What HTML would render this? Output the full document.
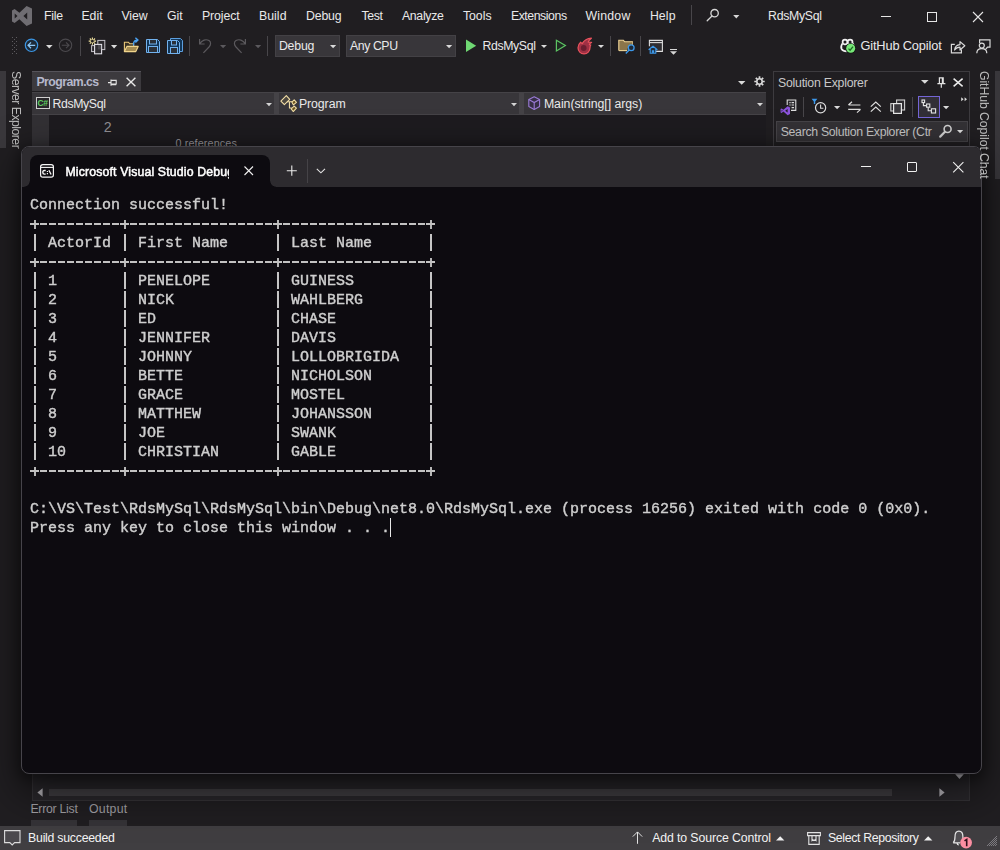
<!DOCTYPE html>
<html><head><meta charset="utf-8"><title>RdsMySql - Microsoft Visual Studio</title>
<style>
*{box-sizing:border-box;margin:0;padding:0}
html,body{width:1000px;height:850px;overflow:hidden}
body{position:relative;background:#201e21;font-family:"Liberation Sans",sans-serif;font-size:12px;color:#f0f0f0}
.b{position:absolute}
.t{position:absolute;white-space:pre;display:inline-block}
svg{position:absolute;overflow:visible}
.v{position:absolute;will-change:transform;white-space:pre;transform-origin:0 0;transform:rotate(90deg);font-size:12.3px;line-height:12.3px;color:#bababa}
#con{will-change:transform;position:absolute;left:21px;top:146px;width:961px;height:628px;border-radius:8px;background:#0d0b10;border:1px solid #46444a;box-shadow:0 16px 40px 4px rgba(0,0,0,.5),0 3px 14px 2px rgba(0,0,0,.4);overflow:hidden}
#con .tb{position:absolute;left:0;top:0;width:100%;height:40px;background:#2d2b2f}
#con .tab{position:absolute;left:8px;top:8px;width:240px;height:33px;background:#0d0b10;border-radius:8px 8px 0 0}
#con pre{position:absolute;left:8px;top:49px;font-family:"Liberation Mono",monospace;font-size:15px;line-height:19px;color:#cfcfcf;white-space:pre;-webkit-text-stroke:.4px #cdcdcd}
#con .hl{position:absolute;left:8px;width:405px;height:2px;background:repeating-linear-gradient(90deg,transparent 0,transparent 1px,#c2c2c2 1px,#c2c2c2 8.2px,transparent 8.2px,transparent 9px)}
#con .pl{position:absolute;width:2px;height:9px;background:#b6b6b6}
#con .ph{position:absolute;width:9px;height:2px;background:#c2c2c2}
#con .vb{position:absolute;width:1.8px;background:repeating-linear-gradient(180deg,transparent 0,transparent 1.2px,#c6c6c6 1.2px,#c6c6c6 17.8px,transparent 17.8px,transparent 19px)}
#con pre i{font-style:normal;color:transparent;-webkit-text-stroke:0 transparent}

</style></head>
<body>
<!-- side strips -->
<div class="b" style="left:0;top:71px;width:6px;height:77px;background:#3a383c"></div>
<div class="b" style="left:995px;top:71px;width:5px;height:108px;background:#39373b"></div>
<div class="v" style="left:22.3px;top:70.8px;letter-spacing:-0.55px">Server Explorer</div>

<!-- toolbar combos -->
<div class="b" style="left:275px;top:35px;width:65px;height:22px;background:#38363a;border:1px solid #434145"></div>
<div class="b" style="left:346px;top:35px;width:110px;height:22px;background:#38363a;border:1px solid #434145"></div>

<!-- document tab -->
<div class="b" style="left:32px;top:71px;width:109px;height:20px;background:#3c3a3e;border-top:1px solid #55535a"></div>
<!-- nav bar -->
<div class="b" style="left:32px;top:92px;width:734px;height:23px;background:#454347"></div>
<div class="b" style="left:32px;top:93px;width:242px;height:21px;background:#38363a"></div>
<div class="b" style="left:279px;top:93px;width:240px;height:21px;background:#38363a"></div>
<div class="b" style="left:524px;top:93px;width:242px;height:21px;background:#38363a"></div>
<!-- editor -->
<div class="b" style="left:32px;top:115px;width:734px;height:659px;background:#1d1b1f"></div>
<div class="b" style="left:32px;top:115px;width:17px;height:659px;background:#323034"></div>

<!-- solution explorer -->
<div class="b" style="left:773px;top:71px;width:197px;height:730px;border:1px solid #3d3b3f"></div>
<div class="b" style="left:776px;top:121px;width:192px;height:21px;background:#333135;border:1px solid #454347"></div>
<div class="b" style="left:918px;top:96px;width:22px;height:22px;border:1px solid #7465d6;background:#322f37"></div>

<!-- bottom scroll area -->
<div class="b" style="left:32px;top:773px;width:938px;height:28px;background:#29272b;border:1px solid #353337;border-top:none"></div>
<div class="b" style="left:49px;top:789px;width:843px;height:7px;background:#403e42"></div>
<div class="b" style="left:31px;top:820px;width:46px;height:6px;background:#353337"></div>
<div class="b" style="left:89px;top:820px;width:38px;height:6px;background:#353337"></div>

<!-- status bar -->
<div class="b" style="left:0;top:826px;width:1000px;height:24px;background:#403e41"></div>

<!-- VS logo -->
<svg style="left:12px;top:6px" width="20" height="20" viewBox="0 0 20 20"><path fill="#6f6d72" fill-rule="evenodd" d="M14.6 0 20 2.6V17.4L14.6 20 7.4 13.3 2.6 17 0 15.6V4.4L2.6 3 7.4 6.7ZM15.2 6.6 11.4 10 15.2 13.4ZM2.7 7.5V12.5L5.5 10Z"/></svg>
<!-- menu separator + search -->
<div class="b" style="left:691px;top:5px;width:1px;height:20px;background:#48464a"></div>
<svg style="left:706px;top:8px" width="14" height="14" viewBox="0 0 14 14"><circle cx="8.6" cy="5.2" r="3.7" fill="none" stroke="#d6d6d6" stroke-width="1.3"/><path d="M6 8 1.2 12.8" stroke="#d6d6d6" stroke-width="1.3" stroke-linecap="round"/></svg>
<svg style="left:733px;top:14.6px" width="7" height="4" viewBox="0 0 7 4"><path d="M0.2 0H6.4L3.3 3.4Z" fill="#d6d6d6"/></svg>
<!-- window controls -->
<div class="b" style="left:881px;top:16px;width:10px;height:1px;background:#e6e6e6"></div>
<div class="b" style="left:927px;top:12px;width:10px;height:10px;border:1px solid #e6e6e6"></div>
<svg style="left:973px;top:12px" width="10" height="10" viewBox="0 0 10 10"><path d="M0 0 10 10M10 0 0 10" stroke="#e6e6e6" stroke-width="1.1"/></svg>

<!-- toolbar grip -->
<svg style="left:12px;top:37px" width="6" height="18" viewBox="0 0 6 18" fill="#5c5a5e"><rect x="0" y="0" width="1" height="1"/><rect x="4" y="0" width="1" height="1"/><rect x="2" y="2" width="1" height="1"/><rect x="0" y="4" width="1" height="1"/><rect x="4" y="4" width="1" height="1"/><rect x="2" y="6" width="1" height="1"/><rect x="0" y="8" width="1" height="1"/><rect x="4" y="8" width="1" height="1"/><rect x="2" y="10" width="1" height="1"/><rect x="0" y="12" width="1" height="1"/><rect x="4" y="12" width="1" height="1"/><rect x="2" y="14" width="1" height="1"/><rect x="0" y="16" width="1" height="1"/><rect x="4" y="16" width="1" height="1"/></svg>
<!-- back / forward -->
<svg style="left:24px;top:38px" width="15" height="15" viewBox="0 0 15 15"><circle cx="7.5" cy="7.3" r="6.2" fill="#1d2a38" stroke="#3b95e3" stroke-width="1.2"/><path d="M11.2 7.3H4.2M7 4.4 4 7.3 7 10.2" fill="none" stroke="#8dc8f8" stroke-width="1.2"/></svg>
<svg style="left:46px;top:45px" width="7" height="4" viewBox="0 0 7 4"><path d="M0 0H6.6L3.3 3.6Z" fill="#dadada"/></svg>
<svg style="left:58px;top:38px" width="15" height="15" viewBox="0 0 15 15"><circle cx="7.5" cy="7.3" r="6.2" fill="none" stroke="#4b494d" stroke-width="1.1"/><path d="M3.8 7.3H10.8M8 4.4 11 7.3 8 10.2" fill="none" stroke="#4b494d" stroke-width="1.1"/></svg>
<div class="b" style="left:80px;top:36px;width:1px;height:20px;background:#48464a"></div>
<!-- new item -->
<svg style="left:88px;top:37px" width="18" height="18" viewBox="0 0 18 18"><rect x="9.8" y="3.4" width="7" height="9.2" fill="#2b292d" stroke="#c6c4ca" stroke-width="1"/><rect x="3.6" y="8.6" width="4" height="6" fill="#2b292d" stroke="#c6c4ca" stroke-width="1"/><rect x="6.6" y="7.4" width="7" height="9.4" fill="#2f2d31" stroke="#e2e0e6" stroke-width="1.1"/><rect x="9.9" y="8" width="3.2" height="4.4" fill="#4a484d"/><path d="M4.4 0.4V2.7M4.4 5.5V7.8M0.7 4.1H3M5.8 4.1H8.1M1.8 1.5 3.4 3.1M5.4 5.1 7 6.7M7 1.5 5.4 3.1M3.4 5.1 1.8 6.7" stroke="#f6e7a2" stroke-width="1.1"/></svg>
<svg style="left:111px;top:45px" width="7" height="4" viewBox="0 0 7 4"><path d="M0 0H6.2L3.1 3.4Z" fill="#dadada"/></svg>
<!-- open folder -->
<svg style="left:123px;top:37px" width="17" height="16" viewBox="0 0 17 16"><path d="M1.4 14.6V5.2H5.4L6.8 6.8H10.6V9.2" fill="#3b3325" stroke="#ecca7a" stroke-width="1.1"/><path d="M1.4 14.6 3.9 9.4H15.2L12.8 14.6Z" fill="#a48b51" stroke="#f1d58c" stroke-width="1.1" stroke-linejoin="round"/><path d="M10.6 8.6V6.8C10.6 4.4 12 3.1 14.4 3.1M12.4 0.8 14.9 3.1 12.4 5.4" fill="none" stroke="#4ba1f1" stroke-width="1.4"/></svg>
<!-- save -->
<svg style="left:146px;top:39px" width="14" height="14" viewBox="0 0 14 14"><path d="M0.5 0.5H11.5L13.5 2.5V13.5H0.5Z" fill="#123658" stroke="#72b2ee" stroke-width="1"/><rect x="3.5" y="0.5" width="7" height="4.5" fill="#2b3037" stroke="#72b2ee" stroke-width="1"/><rect x="2.5" y="7.5" width="9" height="6" fill="#2b3037" stroke="#72b2ee" stroke-width="1"/></svg>
<!-- save all -->
<svg style="left:167px;top:38px" width="16" height="16" viewBox="0 0 16 16"><path d="M3.5 2.5V0.5H13.5L15.5 2.5V13.5H12.5" fill="#123658" stroke="#5c9fdf" stroke-width="1"/><path d="M0.5 2.5H10.5L12.5 4.5V15.5H0.5Z" fill="#123658" stroke="#72b2ee" stroke-width="1"/><rect x="4.5" y="2.5" width="5" height="4.5" fill="#2b3037" stroke="#72b2ee" stroke-width="1"/><rect x="3.5" y="9.5" width="7" height="6" fill="#2b3037" stroke="#72b2ee" stroke-width="1"/></svg>
<div class="b" style="left:189px;top:36px;width:1px;height:20px;background:#48464a"></div>
<!-- undo / redo -->
<svg style="left:198px;top:38px" width="14" height="16" viewBox="0 0 14 16"><path d="M1.6 1V6H6.6M1.8 5.8C4 2 8 0.8 11 2.6 13.4 4.2 12.8 7 11 9L5.4 14.8" fill="none" stroke="#5b595d" stroke-width="1.2"/></svg>
<svg style="left:220px;top:45px" width="7" height="4" viewBox="0 0 7 4"><path d="M0 0H6.2L3.1 3.2Z" fill="#5b595d"/></svg>
<svg style="left:233px;top:38px" width="14" height="16" viewBox="0 0 14 16"><path d="M12.4 1V6H7.4M12.2 5.8C10 2 6 0.8 3 2.6 0.6 4.2 1.2 7 3 9L8.6 14.8" fill="none" stroke="#5b595d" stroke-width="1.2"/></svg>
<svg style="left:255px;top:45px" width="7" height="4" viewBox="0 0 7 4"><path d="M0 0H6.2L3.1 3.2Z" fill="#5b595d"/></svg>
<div class="b" style="left:267px;top:36px;width:1px;height:20px;background:#48464a"></div>
<!-- combo arrows -->
<svg style="left:330px;top:45px" width="7" height="4" viewBox="0 0 7 4"><path d="M0 0H6.2L3.1 3.2Z" fill="#dadada"/></svg>
<svg style="left:446px;top:45px" width="7" height="4" viewBox="0 0 7 4"><path d="M0 0H6.2L3.1 3.2Z" fill="#dadada"/></svg>
<!-- start -->
<svg style="left:465px;top:39px" width="12" height="14" viewBox="0 0 12 14"><path d="M1 0.4 11.2 6.7 1 13Z" fill="#6fd873"/></svg>
<svg style="left:541px;top:45px" width="7" height="4" viewBox="0 0 7 4"><path d="M0 0H6L3 3Z" fill="#dadada"/></svg>
<svg style="left:555px;top:39px" width="12" height="14" viewBox="0 0 12 14"><path d="M1.4 1.2 10.4 6.6 1.4 12Z" fill="#1f2b22" stroke="#5cc463" stroke-width="1.2"/></svg>
<!-- flame -->
<svg style="left:577px;top:37px" width="16" height="18" viewBox="0 0 16 18"><path d="M7 16.9C3.6 16.9 1 14.2 1 10.8 1 8.4 2.2 6.4 3.6 5.2L5.2 6.6C7 3.6 10.6 1.6 14.4 1.2 12.6 2.6 11.4 3.8 11.2 5.2L14.6 5.4C13.4 6 12.6 6.8 12.4 7.6L13.8 8C13.2 8.8 13 9.8 13 10.8 13 14.2 10.4 16.9 7 16.9Z" fill="#a03044" stroke="#e9525d" stroke-width="1.2" stroke-linejoin="round"/><circle cx="6.7" cy="11" r="2.9" fill="#6c1e30"/></svg>
<svg style="left:598px;top:45px" width="7" height="4" viewBox="0 0 7 4"><path d="M0 0H6L3 3Z" fill="#dadada"/></svg>
<div class="b" style="left:610px;top:36px;width:1px;height:20px;background:#48464a"></div>
<!-- folder search -->
<svg style="left:618px;top:39px" width="17" height="16" viewBox="0 0 17 16"><path d="M0.8 11.6V1.2H5.4L6.6 2.8H14.4V8" fill="#8b754a" stroke="#f0d596" stroke-width="1.1"/><path d="M0.8 11.6H9.5V8.6L12 6.2H14.4V3" fill="#8b754a" stroke="none"/><path d="M0.8 11.6H9" fill="none" stroke="#f0d596" stroke-width="1.1"/><circle cx="13.2" cy="8.8" r="2.9" fill="#1e2a38" stroke="#3c98ea" stroke-width="1.3"/><path d="M11.2 11 7.8 14.6" stroke="#3c98ea" stroke-width="1.4"/></svg>
<div class="b" style="left:640px;top:36px;width:1px;height:20px;background:#48464a"></div>
<!-- window home -->
<svg style="left:648px;top:39px" width="16" height="15" viewBox="0 0 16 15"><path d="M3.6 12.4H14.4V1.4H1.4V7.2" fill="#2f2d31" stroke="#dcdcdc" stroke-width="1.1"/><path d="M1.4 3.6H14.4" stroke="#dcdcdc" stroke-width="1.1"/><path d="M0.6 10.8 5 7.2 9.4 10.8M2.2 10V14.2H7.8V10M4.4 14.2V11.8H5.6V14.2" fill="#1f2c3b" stroke="#3c98ea" stroke-width="1.1"/></svg>
<div class="b" style="left:670px;top:49px;width:7px;height:1px;background:#d6d6d6"></div>
<svg style="left:670px;top:51px" width="7" height="4" viewBox="0 0 7 4"><path d="M0 0.2H7L3.5 3.8Z" fill="#d6d6d6"/></svg>
<!-- copilot -->
<svg style="left:839.5px;top:38px" width="17" height="17" viewBox="0 0 17 17"><g fill="none" stroke="#f2f2f2" stroke-width="1.7"><circle cx="5" cy="4" r="2.4"/><circle cx="10.1" cy="4" r="2.4"/><path d="M2.5 5.4C1.2 7.4 0.8 9.6 1.6 11 2.6 12.6 4.6 13.3 6.6 13.3M12.6 5.4C13.2 6 13.5 6.6 13.7 7.4"/></g><circle cx="10.7" cy="10.3" r="5.2" fill="#141a14"/><circle cx="10.7" cy="10.3" r="4.5" fill="#77e878"/><path d="M8.5 10.6 10.1 12.2 13 8.6" fill="none" stroke="#1d6a22" stroke-width="1.3"/></svg>
<!-- share -->
<svg style="left:950px;top:40px" width="16" height="14" viewBox="0 0 16 14"><path d="M4.8 4.4H1.4V12.8H11.4V9.6" fill="none" stroke="#dadada" stroke-width="1.2"/><path d="M4.6 10C5 6.6 7 4.8 10 4.6V1.6L14.8 5.8 10 10V7.2C7.8 7.2 6 8 4.6 10Z" fill="none" stroke="#dadada" stroke-width="1.2" stroke-linejoin="round"/></svg>
<!-- feedback -->
<svg style="left:976px;top:39px" width="15" height="15" viewBox="0 0 15 15"><path d="M3.6 4V0.8H14V8.2H11.6L9.8 10" fill="none" stroke="#dadada" stroke-width="1.2"/><circle cx="5.8" cy="6.6" r="2.5" fill="#201e22" stroke="#dadada" stroke-width="1.2"/><path d="M0.8 14.2C0.8 11.2 3 9.6 5.8 9.6 8.6 9.6 10.8 11.2 10.8 14.2" fill="none" stroke="#dadada" stroke-width="1.2"/></svg>

<!-- doc tab pin + close -->
<svg style="left:108px;top:78px" width="9" height="9" viewBox="0 0 9 9"><path d="M0 4.6H3M3 1.4V7.8M3 2.4H8.2V6H3M3 6.6H8.2" fill="none" stroke="#e4e4e4" stroke-width="1.1"/></svg>
<svg style="left:126px;top:77px" width="10" height="10" viewBox="0 0 10 10"><path d="M0.6 0.8 9.4 9.2M9.4 0.8 0.6 9.2" stroke="#e8e8e8" stroke-width="1.4"/></svg>
<!-- tab list arrow + gear -->
<svg style="left:738px;top:81px" width="8" height="4" viewBox="0 0 8 4"><path d="M0 0H7.4L3.7 3.8Z" fill="#dadada"/></svg>
<svg style="left:754px;top:76px" width="11" height="11" viewBox="0 0 11 11"><g fill="none" stroke="#dadada"><circle cx="5.5" cy="5.5" r="2.7" stroke-width="1.6"/><path d="M5.5 0.3V2.2M5.5 8.8V10.7M0.3 5.5H2.2M8.8 5.5H10.7M1.8 1.8 3.2 3.2M7.8 7.8 9.2 9.2M9.2 1.8 7.8 3.2M3.2 7.8 1.8 9.2" stroke-width="1.7"/></g></svg>
<!-- nav combos arrows -->
<svg style="left:266px;top:103px" width="7" height="4" viewBox="0 0 7 4"><path d="M0 0H6L3 3.2Z" fill="#d4d4d4"/></svg>
<svg style="left:511px;top:103px" width="7" height="4" viewBox="0 0 7 4"><path d="M0 0H6L3 3.2Z" fill="#d4d4d4"/></svg>
<svg style="left:757px;top:103px" width="7" height="4" viewBox="0 0 7 4"><path d="M0 0H6L3 3.2Z" fill="#d4d4d4"/></svg>
<!-- C# icon -->
<div class="b" style="left:36px;top:97px;width:14px;height:12px;border:1px solid #cfcfcf;background:#29272b"></div>
<span class="t" style="left:37.6px;top:98.6px;font-size:8.5px;line-height:9px;font-weight:700;color:#5fcf62;letter-spacing:-0.6px">C#</span>
<!-- class icon -->
<svg style="left:280.2px;top:94.7px" width="17.5" height="17.5" viewBox="0 0 18 18"><g stroke="#f3dfa6" stroke-width="1.1" stroke-linejoin="round"><path d="M6.5 0.7 10 4.5 4.5 9.9 0.9 6.3Z" fill="#4b463f"/><path d="M14.6 4.9 16.9 7.6 13.8 10.2 12.2 7.3Z" fill="#6b5522"/><path d="M14.6 11.5 16.9 13.5 13.6 17 11.5 14.3Z" fill="#6b5522"/><path d="M7.1 7H12.4M9.7 7V13.3H12" fill="none"/></g></svg>
<!-- cube icon -->
<svg style="left:528px;top:96px" width="13" height="14" viewBox="0 0 13 14"><path d="M6.2 0.8 11.6 3.6V10.4L6.2 13.4 0.8 10.4V3.6Z" fill="#362e45" stroke="#9a7bd6" stroke-width="1.1" stroke-linejoin="round"/><path d="M0.8 3.6 6.2 6.6 11.6 3.6M6.2 6.6V13.4" fill="none" stroke="#9a7bd6" stroke-width="1.1"/></svg>

<!-- SE header -->
<svg style="left:921px;top:80px" width="8" height="4" viewBox="0 0 8 4"><path d="M0 0H7.6L3.8 3.8Z" fill="#dadada"/></svg>
<svg style="left:937px;top:77px" width="9" height="11" viewBox="0 0 9 11"><path d="M2.4 6.4V0.8H6.2V6.4M5.4 0.8V6.4M0.4 6.6H8.4M4.3 6.6V10.8" fill="none" stroke="#e4e4e4" stroke-width="1.2"/></svg>
<svg style="left:953px;top:78px" width="10" height="9" viewBox="0 0 10 9"><path d="M0.6 0.6 9.6 8.4M9.6 0.6 0.6 8.4" stroke="#ececec" stroke-width="1.5"/></svg>
<!-- SE toolbar -->
<svg style="left:780px;top:99px" width="17" height="17" viewBox="0 0 17 17"><path d="M7.2 6V1H15.8V11.4H11" fill="#2a282c" stroke="#dcdcdc" stroke-width="1.1"/><path d="M9.4 3.6H10.6M11.6 3.6H14M9.4 6H10.6M11.6 6H14M11.6 8.6H14" stroke="#dcdcdc" stroke-width="1.1"/><path fill="#8b53dc" fill-rule="evenodd" d="M7.6 7.2 10 8.4V15L7.6 16.2 3.4 12.6 1.6 14 0.6 13.5V9.9L1.6 9.4 3.4 10.8ZM7.6 10 5.2 11.7 7.6 13.4ZM1.6 10.7V12.7L2.7 11.7Z"/></svg>
<div class="b" style="left:803px;top:97px;width:1px;height:20px;background:#48464a"></div>
<svg style="left:811px;top:98px" width="16" height="17" viewBox="0 0 16 17"><path d="M0.6 0.8H6.4L4.2 3.4V6H2.8V3.4Z" fill="#3c98ea"/><circle cx="9.6" cy="9.8" r="5.1" fill="#201e22" stroke="#dcdcdc" stroke-width="1.2"/><path d="M9.6 6.6V10.2H12.4" fill="none" stroke="#dcdcdc" stroke-width="1.1"/></svg>
<svg style="left:834px;top:106px" width="7" height="4" viewBox="0 0 7 4"><path d="M0 0H6.2L3.1 3.2Z" fill="#dadada"/></svg>
<svg style="left:847px;top:101px" width="15" height="12" viewBox="0 0 15 12"><path d="M13.4 4H1.6M5 0.8 1.4 4M1.2 8.4H13.4M10 11.6 13.6 8.4" fill="none" stroke="#dedede" stroke-width="1.2"/></svg>
<svg style="left:870px;top:101px" width="12" height="12" viewBox="0 0 12 12"><path d="M0.8 5.6 5.8 1 10.8 5.6M0.8 10.6 5.8 6 10.8 10.6" fill="none" stroke="#dedede" stroke-width="1.2"/></svg>
<svg style="left:890px;top:99px" width="16" height="15" viewBox="0 0 16 15"><rect x="6.6" y="1" width="8" height="10" fill="#2e2c30" stroke="#d0d0d0" stroke-width="1.1"/><rect x="0.8" y="4.6" width="5" height="7.4" fill="#2a282c" stroke="#d0d0d0" stroke-width="1.1"/><rect x="3.6" y="4.6" width="7.8" height="9.8" fill="#3a383c" stroke="#e6e6e6" stroke-width="1.2"/></svg>
<div class="b" style="left:912px;top:97px;width:1px;height:20px;background:#48464a"></div>
<svg style="left:921px;top:99px" width="16" height="16" viewBox="0 0 16 16"><g fill="#322f37" stroke="#e4e4e4" stroke-width="1.1"><rect x="1" y="1" width="2.6" height="2.6"/><rect x="5.6" y="5" width="3.2" height="3.2"/><rect x="10.4" y="9.8" width="4.2" height="4.2"/></g><path d="M2.4 3.8V6.6H5.4M7.2 8.4V11.8H10.2" fill="none" stroke="#e4e4e4" stroke-width="1.1"/></svg>
<svg style="left:943px;top:106px" width="7" height="4" viewBox="0 0 7 4"><path d="M0 0H6.2L3.1 3.2Z" fill="#dadada"/></svg>
<svg style="left:961px;top:97px" width="7" height="5" viewBox="0 0 7 5"><path d="M0.2 0.2 2.6 2.2 0.2 4.2ZM3.6 0.2 6 2.2 3.6 4.2Z" fill="#dadada"/></svg>
<!-- SE search icon -->
<svg style="left:939px;top:124px" width="14" height="14" viewBox="0 0 14 14"><circle cx="8.6" cy="5" r="3.5" fill="none" stroke="#cfcfcf" stroke-width="1.6"/><path d="M6 7.8 1.2 12.6" stroke="#cfcfcf" stroke-width="2.2" stroke-linecap="round"/></svg>
<svg style="left:957px;top:130px" width="7" height="4" viewBox="0 0 7 4"><path d="M0 0H6.2L3.1 3.2Z" fill="#dadada"/></svg>

<span class="t" style="left:43.90px;top:10.31px;font-size:12.3px;line-height:12.3px;color:#e9e9e9;letter-spacing:-0.207px;">File</span>
<span class="t" style="left:81.40px;top:10.31px;font-size:12.3px;line-height:12.3px;color:#e9e9e9;letter-spacing:-0.001px;">Edit</span>
<span class="t" style="left:121.40px;top:10.31px;font-size:12.3px;line-height:12.3px;color:#e9e9e9;letter-spacing:-0.059px;">View</span>
<span class="t" style="left:166.90px;top:10.31px;font-size:12.3px;line-height:12.3px;color:#e9e9e9;letter-spacing:-0.006px;">Git</span>
<span class="t" style="left:201.90px;top:10.31px;font-size:12.3px;line-height:12.3px;color:#e9e9e9;letter-spacing:-0.083px;">Project</span>
<span class="t" style="left:258.90px;top:10.31px;font-size:12.3px;line-height:12.3px;color:#e9e9e9;letter-spacing:0.068px;">Build</span>
<span class="t" style="left:305.90px;top:10.31px;font-size:12.3px;line-height:12.3px;color:#e9e9e9;letter-spacing:-0.110px;">Debug</span>
<span class="t" style="left:361.40px;top:10.31px;font-size:12.3px;line-height:12.3px;color:#e9e9e9;letter-spacing:-0.341px;">Test</span>
<span class="t" style="left:401.90px;top:10.31px;font-size:12.3px;line-height:12.3px;color:#e9e9e9;letter-spacing:-0.293px;">Analyze</span>
<span class="t" style="left:462.90px;top:10.31px;font-size:12.3px;line-height:12.3px;color:#e9e9e9;letter-spacing:-0.004px;">Tools</span>
<span class="t" style="left:510.90px;top:10.31px;font-size:12.3px;line-height:12.3px;color:#e9e9e9;letter-spacing:-0.446px;">Extensions</span>
<span class="t" style="left:585.40px;top:10.31px;font-size:12.3px;line-height:12.3px;color:#e9e9e9;letter-spacing:0.242px;">Window</span>
<span class="t" style="left:649.90px;top:10.31px;font-size:12.3px;line-height:12.3px;color:#e9e9e9;letter-spacing:0.101px;">Help</span>
<span class="t" style="left:768.10px;top:10.31px;font-size:12.3px;line-height:12.3px;color:#e9e9e9;letter-spacing:-0.318px;">RdsMySql</span>
<span class="t" style="left:278.90px;top:40.11px;font-size:12.3px;line-height:12.3px;color:#e9e9e9;letter-spacing:-0.170px;">Debug</span>
<span class="t" style="left:350.00px;top:40.11px;font-size:12.3px;line-height:12.3px;color:#e9e9e9;letter-spacing:-0.425px;">Any CPU</span>
<span class="t" style="left:482.40px;top:40.11px;font-size:12.3px;line-height:12.3px;color:#e9e9e9;letter-spacing:-0.356px;">RdsMySql</span>
<span class="t" style="left:860.40px;top:39.88px;font-size:12.8px;line-height:12.8px;color:#e9e9e9;letter-spacing:-0.144px;">GitHub Copilot</span>
<span class="t" style="left:36.40px;top:75.51px;font-size:12.3px;line-height:12.3px;color:#b6b8cb;font-weight:700;letter-spacing:-0.547px;">Program.cs</span>
<span class="t" style="left:52.40px;top:97.51px;font-size:12.3px;line-height:12.3px;color:#e9e9e9;letter-spacing:-0.356px;">RdsMySql</span>
<span class="t" style="left:298.90px;top:97.51px;font-size:12.3px;line-height:12.3px;color:#e9e9e9;letter-spacing:-0.065px;">Program</span>
<span class="t" style="left:543.90px;top:97.51px;font-size:12.3px;line-height:12.3px;color:#e9e9e9;letter-spacing:-0.037px;">Main(string[] args)</span>
<span class="t" style="left:103.70px;top:119.70px;font-size:14.2px;line-height:14.2px;color:#908e92;letter-spacing:0.309px;">2</span>
<span class="t" style="left:175.40px;top:137.77px;font-size:10.8px;line-height:10.8px;color:#9a989c;letter-spacing:0.132px;">0 references</span>
<span class="t" style="left:778.00px;top:76.91px;font-size:12.3px;line-height:12.3px;color:#c8c8c8;letter-spacing:-0.239px;">Solution Explorer</span>
<span class="t" style="left:780.70px;top:126.11px;font-size:12.3px;line-height:12.3px;color:#c4c4c4;letter-spacing:-0.312px;">Search Solution Explorer (Ctr</span>
<span class="t" style="left:30.40px;top:803.11px;font-size:12.3px;line-height:12.3px;color:#a2a0a5;letter-spacing:-0.269px;">Error List</span>
<span class="t" style="left:88.90px;top:803.11px;font-size:12.3px;line-height:12.3px;color:#a2a0a5;letter-spacing:0.296px;">Output</span>
<span class="t" style="left:28.10px;top:831.51px;font-size:12.3px;line-height:12.3px;color:#f4f4f4;letter-spacing:-0.250px;">Build succeeded</span>
<span class="t" style="left:652.20px;top:831.51px;font-size:12.3px;line-height:12.3px;color:#f4f4f4;letter-spacing:-0.114px;">Add to Source Control</span>
<span class="t" style="left:828.00px;top:831.51px;font-size:12.3px;line-height:12.3px;color:#f4f4f4;letter-spacing:-0.340px;">Select Repository</span>

<!-- console window -->
<div id="con">
<div class="tb"></div>
<div class="tab"></div>
<div class="b" style="left:2px;top:34px;width:6px;height:6px;background:radial-gradient(circle at 0 0,#2d2b2f 5.3px,#0d0b10 6px)"></div>
<div class="b" style="left:248px;top:34px;width:6px;height:6px;background:radial-gradient(circle at 100% 0,#2d2b2f 5.3px,#0d0b10 6px)"></div>
<pre>Connection successful!
<i>+---------+----------------+----------------+</i>
<i>|</i> ActorId <i>|</i> First Name     <i>|</i> Last Name      <i>|</i>
<i>+---------+----------------+----------------+</i>
<i>|</i> 1       <i>|</i> PENELOPE       <i>|</i> GUINESS        <i>|</i>
<i>|</i> 2       <i>|</i> NICK           <i>|</i> WAHLBERG       <i>|</i>
<i>|</i> 3       <i>|</i> ED             <i>|</i> CHASE          <i>|</i>
<i>|</i> 4       <i>|</i> JENNIFER       <i>|</i> DAVIS          <i>|</i>
<i>|</i> 5       <i>|</i> JOHNNY         <i>|</i> LOLLOBRIGIDA   <i>|</i>
<i>|</i> 6       <i>|</i> BETTE          <i>|</i> NICHOLSON      <i>|</i>
<i>|</i> 7       <i>|</i> GRACE          <i>|</i> MOSTEL         <i>|</i>
<i>|</i> 8       <i>|</i> MATTHEW        <i>|</i> JOHANSSON      <i>|</i>
<i>|</i> 9       <i>|</i> JOE            <i>|</i> SWANK          <i>|</i>
<i>|</i> 10      <i>|</i> CHRISTIAN      <i>|</i> GABLE          <i>|</i>
<i>+---------+----------------+----------------+</i>

C:\VS\Test\RdsMySql\RdsMySql\bin\Debug\net8.0\RdsMySql.exe (process 16256) exited with code 0 (0x0).
Press any key to close this window . . .</pre>
<div class="vb" style="left:12px;top:86px;height:19px"></div><div class="vb" style="left:12px;top:124px;height:190px"></div>
<div class="vb" style="left:102px;top:86px;height:19px"></div><div class="vb" style="left:102px;top:124px;height:190px"></div>
<div class="vb" style="left:255px;top:86px;height:19px"></div><div class="vb" style="left:255px;top:124px;height:190px"></div>
<div class="vb" style="left:408px;top:86px;height:19px"></div><div class="vb" style="left:408px;top:124px;height:190px"></div>
<div class="hl" style="top:76px"></div>
<div class="pl" style="left:12px;top:72.5px"></div><div class="ph" style="left:8px;top:76px"></div>
<div class="pl" style="left:102px;top:72.5px"></div><div class="ph" style="left:98px;top:76px"></div>
<div class="pl" style="left:255px;top:72.5px"></div><div class="ph" style="left:251px;top:76px"></div>
<div class="pl" style="left:408px;top:72.5px"></div><div class="ph" style="left:404px;top:76px"></div>
<div class="hl" style="top:114px"></div>
<div class="pl" style="left:12px;top:110.5px"></div><div class="ph" style="left:8px;top:114px"></div>
<div class="pl" style="left:102px;top:110.5px"></div><div class="ph" style="left:98px;top:114px"></div>
<div class="pl" style="left:255px;top:110.5px"></div><div class="ph" style="left:251px;top:114px"></div>
<div class="pl" style="left:408px;top:110.5px"></div><div class="ph" style="left:404px;top:114px"></div>
<div class="hl" style="top:323px"></div>
<div class="pl" style="left:12px;top:319.5px"></div><div class="ph" style="left:8px;top:323px"></div>
<div class="pl" style="left:102px;top:319.5px"></div><div class="ph" style="left:98px;top:323px"></div>
<div class="pl" style="left:255px;top:319.5px"></div><div class="ph" style="left:251px;top:323px"></div>
<div class="pl" style="left:408px;top:319.5px"></div><div class="ph" style="left:404px;top:323px"></div>
<div class="b" style="left:368px;top:371px;width:1px;height:19px;background:#e8e8e8"></div>
</div>
<!-- console tab icon -->
<svg style="left:40px;top:164px" width="14" height="14" viewBox="0 0 14 14"><rect x="0.6" y="0.6" width="12.8" height="12.6" rx="2.2" fill="none" stroke="#f4f4f4" stroke-width="1.2"/><path d="M0.8 3.4H13.2" stroke="#f4f4f4" stroke-width="1.1"/><path d="M5.7 6.5H4.3C3.3 6.5 2.8 7.1 2.8 8.3 2.8 9.5 3.3 10.1 4.3 10.1H5.7M8.9 6.2 11.1 10.5" fill="none" stroke="#f4f4f4" stroke-width="1.4"/><path d="M6.8 6.9H8V8.1H6.8ZM6.8 9H8V10.2H6.8Z" fill="#f4f4f4"/></svg>
<!-- tab close, plus, sep, chevron -->
<svg style="left:244px;top:166px" width="10" height="10" viewBox="0 0 10 10"><path d="M0.5 0.5 9 9M9 0.5 0.5 9" stroke="#f0f0f0" stroke-width="1.1"/></svg>
<svg style="left:286px;top:165px" width="11" height="11" viewBox="0 0 11 11"><path d="M5.8 0.6V10.8M0.8 5.7H10.8" stroke="#ececec" stroke-width="1.1"/></svg>
<div class="b" style="left:307px;top:159px;width:1px;height:24px;background:#454347"></div>
<svg style="left:316px;top:168px" width="10" height="6" viewBox="0 0 10 6"><path d="M0.8 0.8 4.9 4.8 9 0.8" fill="none" stroke="#e4e4e4" stroke-width="1.1"/></svg>
<!-- console window controls -->
<div class="b" style="left:861px;top:166px;width:10px;height:1px;background:#f0f0f0"></div>
<div class="b" style="left:907px;top:162px;width:10px;height:10px;border:1px solid #f0f0f0;border-radius:1px"></div>
<svg style="left:953px;top:162px" width="11" height="11" viewBox="0 0 11 11"><path d="M0.2 0.2 10.4 10.4M10.4 0.2 0.2 10.4" stroke="#f0f0f0" stroke-width="1.1"/></svg>

<!-- scrollbar arrows -->
<svg style="left:37px;top:788px" width="6" height="9" viewBox="0 0 6 9"><path d="M5.6 0.2V8.8L0.4 4.5Z" fill="#8a888c"/></svg>
<svg style="left:939px;top:788px" width="6" height="9" viewBox="0 0 6 9"><path d="M0.4 0.2V8.8L5.6 4.5Z" fill="#8a888c"/></svg>
<svg style="left:955px;top:774px" width="9" height="5" viewBox="0 0 9 5"><path d="M0.2 0.2H8.8L4.5 5Z" fill="#6a686c"/></svg>

<!-- status bar icons -->
<svg style="left:4px;top:830px" width="17" height="16" viewBox="0 0 17 16"><path d="M0.6 0.6H16V12.6H10.6L8.2 15 5.8 12.6H0.6Z" fill="#4b494d" stroke="#dcdcdc" stroke-width="1.1"/></svg>
<svg style="left:632px;top:831px" width="11" height="13" viewBox="0 0 11 13"><path d="M5.5 12.8V1M0.8 5.6 5.5 0.9 10.2 5.6" fill="none" stroke="#e2e2e2" stroke-width="1"/></svg>
<svg style="left:776px;top:836px" width="9" height="5" viewBox="0 0 9 5"><path d="M0 4.6H8.4L4.2 0.2Z" fill="#f0f0f0"/></svg>
<svg style="left:807px;top:832px" width="14" height="13" viewBox="0 0 14 13"><path d="M0.6 0.6H13.4V3.6H0.6ZM1.8 3.6V12.4H12.2V3.6M5 3.8V8.6L6 7.8 7 8.6 8 7.8 9 8.6V3.8" fill="none" stroke="#e2e2e2" stroke-width="1.1"/></svg>
<svg style="left:924px;top:836px" width="9" height="5" viewBox="0 0 9 5"><path d="M0 4.6H8.4L4.2 0.2Z" fill="#f0f0f0"/></svg>
<svg style="left:952px;top:830px" width="21" height="19" viewBox="0 0 21 19"><path d="M1.4 12.7C2.8 11.4 3 10 3 6.8 3 3.4 4.6 1.2 6.9 1.2 9.2 1.2 10.9 3.4 10.9 6.8V12.7Z" fill="#504e52" stroke="none"/><path d="M1.2 12.8C2.8 11.4 3 10 3 6.8 3 3.4 4.6 1.2 6.9 1.2 9.2 1.2 10.9 3.4 10.9 6.8V9M1.2 12.8H8M5 13.2C5.2 14.4 5.8 15 6.9 15" fill="none" stroke="#e6e6e6" stroke-width="1.2"/><circle cx="14.1" cy="12.6" r="5.9" fill="#fb8ea1"/><path d="M12.5 10.9 14.7 9.4V16.2" fill="none" stroke="#30101c" stroke-width="1.6"/></svg>
<svg style="left:987px;top:836px" width="10" height="10" viewBox="0 0 10 10" fill="#7d7b80"><rect x="9" y="0" width="1" height="1"/><rect x="8" y="1" width="1" height="1"/><rect x="7" y="2" width="1" height="1"/><rect x="9" y="2" width="1" height="1"/><rect x="6" y="3" width="1" height="1"/><rect x="8" y="3" width="1" height="1"/><rect x="5" y="4" width="1" height="1"/><rect x="7" y="4" width="1" height="1"/><rect x="9" y="4" width="1" height="1"/><rect x="4" y="5" width="1" height="1"/><rect x="6" y="5" width="1" height="1"/><rect x="8" y="5" width="1" height="1"/><rect x="3" y="6" width="1" height="1"/><rect x="5" y="6" width="1" height="1"/><rect x="7" y="6" width="1" height="1"/><rect x="9" y="6" width="1" height="1"/><rect x="2" y="7" width="1" height="1"/><rect x="4" y="7" width="1" height="1"/><rect x="6" y="7" width="1" height="1"/><rect x="8" y="7" width="1" height="1"/><rect x="1" y="8" width="1" height="1"/><rect x="3" y="8" width="1" height="1"/><rect x="5" y="8" width="1" height="1"/><rect x="7" y="8" width="1" height="1"/><rect x="9" y="8" width="1" height="1"/><rect x="0" y="9" width="1" height="1"/><rect x="2" y="9" width="1" height="1"/><rect x="4" y="9" width="1" height="1"/><rect x="6" y="9" width="1" height="1"/><rect x="8" y="9" width="1" height="1"/></svg>

<span class="t" style="left:65.40px;top:166.21px;font-size:12.3px;line-height:12.3px;color:#ffffff;letter-spacing:0.147px;-webkit-text-stroke:0.5px #fff;width:164.00px;overflow:hidden;">Microsoft Visual Studio Debug</span>
<div class="v" style="left:989.8px;top:70.6px;letter-spacing:-0.09px">GitHub Copilot Chat</div>


</body></html>
